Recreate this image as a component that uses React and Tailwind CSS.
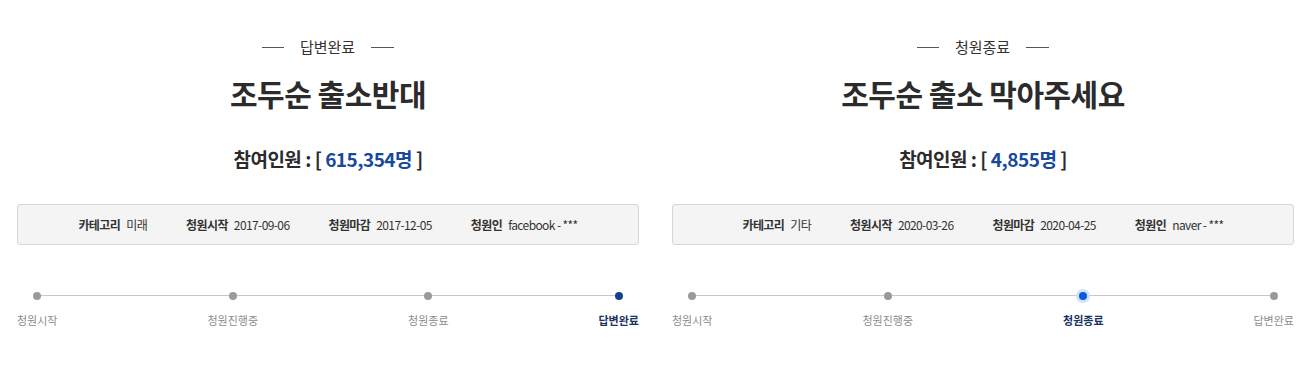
import React from "react";

const petitions = [
  {
    status: "답변완료",
    title: "조두순 출소반대",
    count: "615,354",
    category: "미래",
    start: "2017-09-06",
    end: "2017-12-05",
    author: "facebook - ***",
    step: 3,
  },
  {
    status: "청원종료",
    title: "조두순 출소 막아주세요",
    count: "4,855",
    category: "기타",
    start: "2020-03-26",
    end: "2020-04-25",
    author: "naver - ***",
    step: 2,
  },
];

const steps = ["청원시작", "청원진행중", "청원종료", "답변완료"];

function Progress({ step }) {
  return (
    <div className="relative mt-[47px]">
      <div className="absolute left-[20px] right-[17px] top-[3px] h-px bg-[#c8c8c8]" />
      <div className="relative flex justify-between">
        {steps.map((s, i) => {
          const active = i === step;
          const last = i === steps.length - 1;
          return (
            <div key={s} className="flex flex-col items-center">
              {active && !last ? (
                <span className="w-[8px] h-[8px] rounded-full bg-[#0d5ad6] shadow-[0_0_0_3px_#cfe1fb]" />
              ) : (
                <span className={`w-[8px] h-[8px] rounded-full ${active ? "bg-[#14408e]" : "bg-[#9a9a9a]"}`} />
              )}
              <span
                className={`mt-[13px] text-[11px] leading-[14px] ${
                  active ? "font-bold text-[#1c3160]" : "text-[#8c8c8c]"
                }`}
              >
                {s}
              </span>
            </div>
          );
        })}
      </div>
    </div>
  );
}

function Petition({ p }) {
  return (
    <div className="flex-1 flex flex-col">
      <div className="flex items-center justify-center gap-[16px] pt-[37px] text-[15px] leading-[20px] text-[#333]">
        <span className="w-[22px] h-px bg-[#555]" />
        <span>{p.status}</span>
        <span className="w-[23px] h-px bg-[#555]" />
      </div>
      <h2 className="mt-[16px] text-center text-[30px] leading-[40px] font-bold text-[#2b2b2b] tracking-[-0.5px]">
        {p.title}
      </h2>
      <p className="mt-[33px] text-center text-[19px] leading-[26px] font-bold text-[#2b2b2b] tracking-[-0.5px]">
        참여인원 : [ <span className="text-[#174a9b]">{p.count}명</span> ]
      </p>
      <div className="mt-[32px] h-[41px] flex items-center justify-center gap-[39px] rounded-[3px] border border-[#d6d6d6] bg-[#f4f4f4] text-[12px] text-[#333] tracking-[-0.6px]">
        <span>
          <b className="mr-[6px]">카테고리</b>
          {p.category}
        </span>
        <span>
          <b className="mr-[6px]">청원시작</b>
          {p.start}
        </span>
        <span>
          <b className="mr-[6px]">청원마감</b>
          {p.end}
        </span>
        <span>
          <b className="mr-[6px]">청원인</b>
          {p.author}
        </span>
      </div>
      <Progress step={p.step} />
    </div>
  );
}

export default function App() {
  return (
    <div
      className="w-[1302px] h-[372px] bg-white flex gap-[33px] pl-[17px] pr-[8px]"
      style={{ fontFamily: '"Noto Sans CJK KR", "Noto Sans", sans-serif' }}
    >
      {petitions.map((p) => (
        <Petition key={p.title} p={p} />
      ))}
    </div>
  );
}
